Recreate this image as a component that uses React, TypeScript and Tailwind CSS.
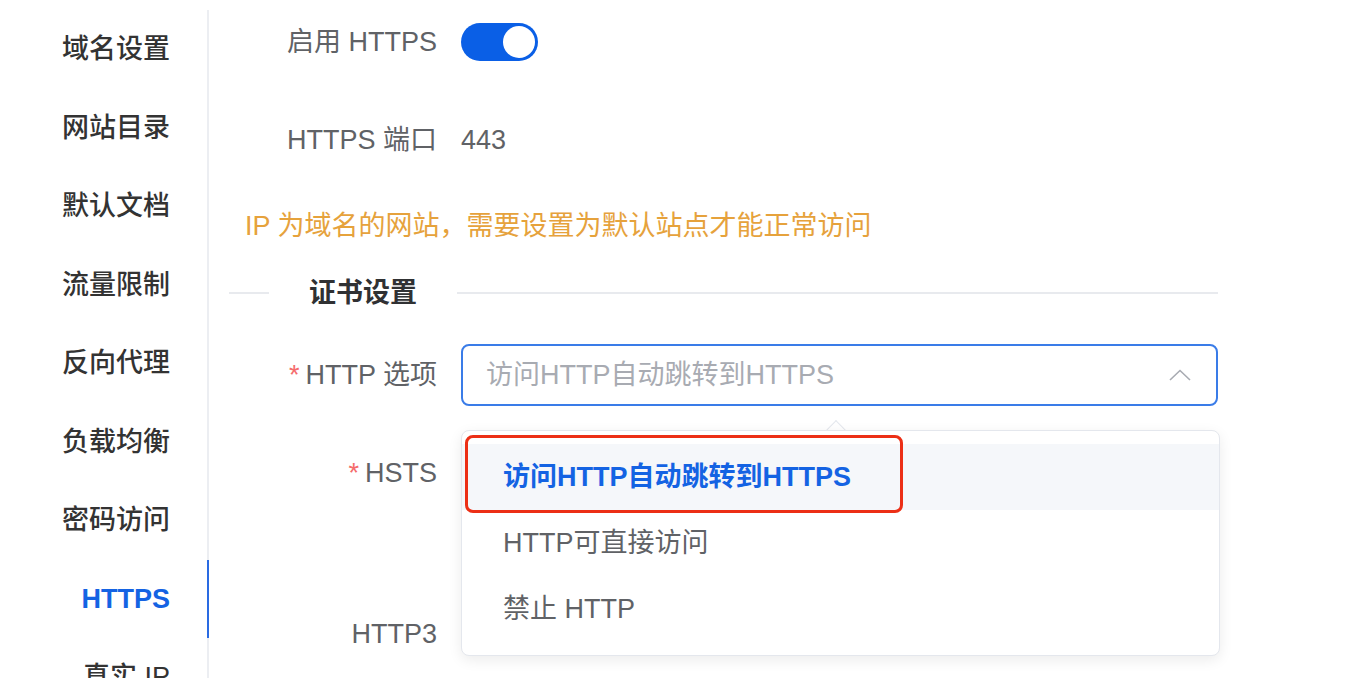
import React from 'react';

const font = "font-['Liberation_Sans','Noto_Sans_CJK_SC',sans-serif]";

const menu = ['域名设置', '网站目录', '默认文档', '流量限制', '反向代理', '负载均衡', '密码访问', 'HTTPS', '真实 IP'];

function Sidebar() {
  return (
    <aside className="w-[209px] shrink-0 pt-[10px]">
      <div className="border-r-2 border-[#eceef2]">
        {menu.map((item) => {
          const active = item === 'HTTPS';
          return (
            <div key={item} className="relative h-[78.5px] flex items-center justify-end pr-[37px]">
              <span
                className={
                  active
                    ? 'text-[27px] font-bold text-[#1463e3]'
                    : 'text-[27px] font-medium text-[#333]'
                }
              >
                {item}
              </span>
              {active && <div className="absolute right-[-2px] top-0 bottom-0 w-[2px] bg-[#2a6be2]" />}
            </div>
          );
        })}
      </div>
    </aside>
  );
}

function Switch({ on }: { on: boolean }) {
  return (
    <div
      className={
        on
          ? 'w-[77px] h-[38px] rounded-full bg-[#0a5fe6] flex items-center justify-end px-[3px]'
          : 'w-[77px] h-[38px] rounded-full bg-[#dcdfe6] flex items-center justify-start px-[3px]'
      }
    >
      <div className="w-[32px] h-[32px] rounded-full bg-white" />
    </div>
  );
}

function Label({ children, required }: { children: React.ReactNode; required?: boolean }) {
  return (
    <div className="w-[232px] shrink-0 pr-[24px] text-right text-[27px] text-[#606266]">
      {required && <span className="text-[#f56c6c] mr-[6px]">*</span>}
      {children}
    </div>
  );
}

function Dropdown() {
  const options = ['访问HTTP自动跳转到HTTPS', 'HTTP可直接访问', '禁止 HTTP'];
  return (
    <div className="absolute left-[252px] top-[430px] w-[759px]">
      {/* arrow */}
      <div className="absolute left-[368px] top-[-7px] w-[14px] h-[14px] rotate-45 bg-white border-l border-t border-[#e4e7ed]" />
      <div className="relative rounded-[8px] border border-[#e4e7ed] bg-white shadow-[0_4px_14px_rgba(0,0,0,0.08)] py-[13px]">
        {options.map((opt, i) => (
          <div
            key={opt}
            className={
              i === 0
                ? 'h-[66px] flex items-center pl-[41px] bg-[#f5f7fa] text-[27px] font-bold text-[#1463e3]'
                : 'h-[66px] flex items-center pl-[41px] text-[27px] text-[#606266]'
            }
          >
            {opt}
          </div>
        ))}
      </div>
      {/* highlight box */}
      <div className="absolute left-[4px] top-[5px] w-[438px] h-[78px] rounded-[8px] border-[3px] border-[#ec2f16]" />
    </div>
  );
}

function Main() {
  return (
    <main className="relative flex-1 pl-[20px] pr-[134px]">
      <div className="flex items-center h-[62px] mt-[11px]">
        <Label>启用 HTTPS</Label>
        <Switch on />
      </div>

      <div className="flex items-center h-[62px] mt-[36px]">
        <Label>HTTPS 端口</Label>
        <span className="text-[27px] text-[#606266]">443</span>
      </div>

      <div className="h-[40px] mt-[35px] flex items-center pl-[16px] text-[27px] text-[#e6a23c]">
        IP 为域名的网站，需要设置为默认站点才能正常访问
      </div>

      <div className="h-[40px] mt-[27px] flex items-center">
        <div className="w-[40px] h-[2px] bg-[#e8eaee]" />
        <span className="px-[40px] text-[27px] font-bold text-[#303133]">证书设置</span>
        <div className="flex-1 h-[2px] bg-[#e8eaee]" />
      </div>

      <div className="flex items-center h-[62px] mt-[31px]">
        <Label required>HTTP 选项</Label>
        <div className="flex-1 h-[62px] rounded-[8px] border-2 border-[#3a7ce8] flex items-center justify-between pl-[23px] pr-[25px]">
          <span className="text-[27px] text-[#a8abb2]">访问HTTP自动跳转到HTTPS</span>
          <svg width="22" height="12" viewBox="0 0 22 12" fill="none">
            <path d="M1 11L11 1.5L21 11" stroke="#a8abb2" strokeWidth="1.6" />
          </svg>
        </div>
      </div>

      <div className="flex items-center h-[62px] mt-[36px]">
        <Label required>HSTS</Label>
        <Switch on={false} />
      </div>

      <div className="flex items-center h-[62px] mt-[99px]">
        <Label>HTTP3</Label>
        <Switch on={false} />
      </div>

      <Dropdown />
    </main>
  );
}

export default function App() {
  return (
    <div className={`${font} w-[1352px] h-[678px] overflow-hidden bg-white flex`}>
      <Sidebar />
      <Main />
    </div>
  );
}
